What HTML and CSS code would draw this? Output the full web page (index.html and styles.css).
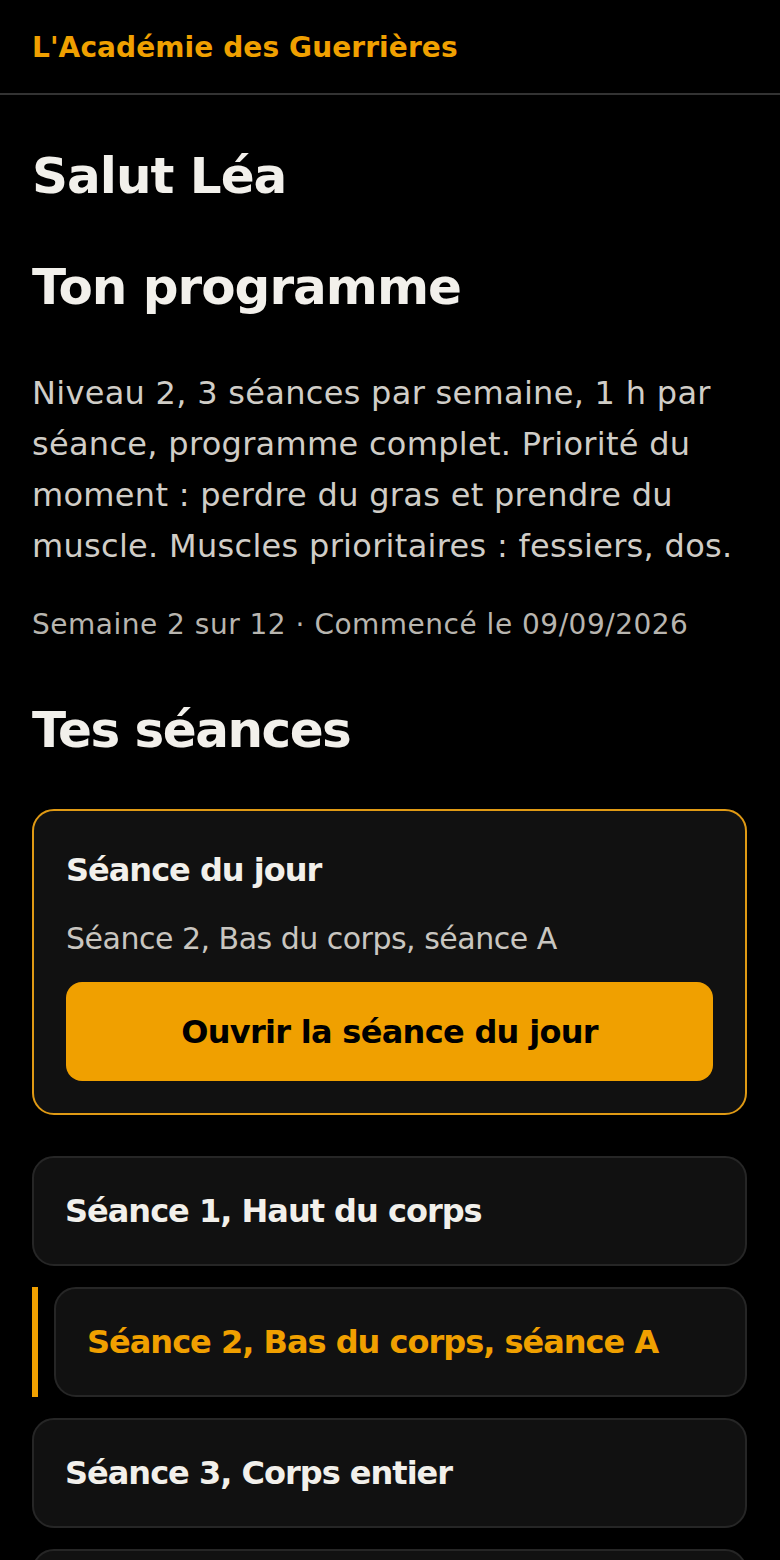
FILE: index.html
```html
<!DOCTYPE html>
<html lang="fr">
<head>
<meta charset="utf-8">
<title>L'Académie des Guerrières</title>
<link rel="stylesheet" href="styles.css">
</head>
<body>
<header class="topbar">
  <span class="brand">L'Académie des Guerrières</span>
</header>
<main class="page">
  <h1 class="title title-hello">Salut Léa</h1>
  <h2 class="title title-program">Ton programme</h2>
  <p class="summary">Niveau 2, 3 séances par semaine, 1 h par séance, programme complet. Priorité du moment : perdre du gras et prendre du muscle. Muscles prioritaires : fessiers, dos.</p>
  <p class="meta">Semaine 2 sur 12 · Commencé le 09/09/2026</p>
  <h2 class="title title-sessions">Tes séances</h2>
  <section class="today">
    <h3 class="today-title">Séance du jour</h3>
    <p class="today-sub">Séance 2, Bas du corps, séance A</p>
    <a class="btn" href="#">Ouvrir la séance du jour</a>
  </section>
  <ul class="sessions">
    <li class="session-row"><a class="session" href="#">Séance 1, Haut du corps</a></li>
    <li class="session-row is-current"><a class="session" href="#">Séance 2, Bas du corps, séance A</a></li>
    <li class="session-row"><a class="session" href="#">Séance 3, Corps entier</a></li>
    <li class="session-row"><a class="session" href="#">Séance 4, Bas du corps, séance B</a></li>
  </ul>
</main>
</body>
</html>
```
FILE: styles.css
```css
* { box-sizing: border-box; }
html, body { margin: 0; padding: 0; background: #000; }
body {
  font-family: "DejaVu Sans", "Noto Sans", sans-serif;
  color: #f2f0eb;
  -webkit-font-smoothing: antialiased;
}
.topbar {
  padding: 31px 32px 28px;
  border-bottom: 2px solid #333;
}
.brand {
  display: block;
  font-size: 28px;
  line-height: 34px;
  font-weight: 700;
  color: #f0a000;
  letter-spacing: 0.1px;
}
.page {
  padding: 0 33px 40px 32px;
}
.title {
  margin: 0;
  font-size: 50px;
  line-height: 60px;
  font-weight: 700;
  letter-spacing: -1px;
  color: #f2f0eb;
}
.title-hello { margin-top: 51px; }
.title-program { margin-top: 51px; }
.title-sessions { margin-top: 56px; letter-spacing: -1.5px; }
.summary {
  margin: 51px 0 0;
  font-size: 32px;
  line-height: 51px;
  color: #d0cdc7;
  letter-spacing: 0.3px;
}
.meta {
  margin: 33px 0 0;
  font-size: 28px;
  line-height: 39px;
  color: #b8b5af;
  letter-spacing: 0.5px;
}
.today {
  margin-top: 49px;
  background: #111;
  border: 2px solid #e09a14;
  border-radius: 22px;
  padding: 32px 32px 32px;
}
.today-title {
  margin: 5px 0 0;
  font-size: 32px;
  line-height: 45px;
  font-weight: 700;
  letter-spacing: -1px;
  color: #f2f0eb;
}
.today-sub {
  margin: 25px 0 0;
  font-size: 30px;
  line-height: 42px;
  color: #c9c6c0;
  letter-spacing: -0.5px;
}
.btn {
  margin-top: 22px;
  display: flex;
  align-items: center;
  justify-content: center;
  height: 99px;
  border-radius: 16px;
  background: #f0a000;
  color: #000;
  text-decoration: none;
  font-size: 32px;
  font-weight: 700;
  letter-spacing: -0.7px;
}
.sessions {
  list-style: none;
  margin: 41px 0 0;
  padding: 0;
  display: flex;
  flex-direction: column;
  gap: 21px;
}
.session-row { display: flex; }
.session {
  flex: 1;
  display: flex;
  align-items: center;
  height: 110px;
  padding: 0 31px;
  background: #111;
  border: 2px solid #262626;
  border-radius: 22px;
  color: #f2f0eb;
  text-decoration: none;
  font-size: 32px;
  font-weight: 700;
  letter-spacing: -1px;
}
.session-row.is-current {
  border-left: 6px solid #f0a000;
  padding-left: 16px;
}
.session-row.is-current .session {
  color: #f0a000;
}
```
